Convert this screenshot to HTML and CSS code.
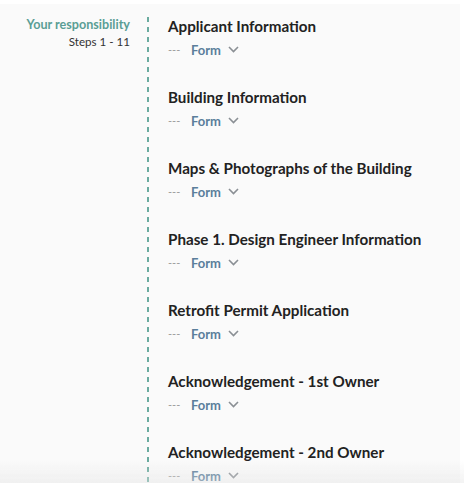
FILE: index.html
```html
<!DOCTYPE html>
<html lang="en">
<head>
    <meta charset="UTF-8">
    <meta name="viewport" content="width=device-width, initial-scale=1.0">
    <title>Steps</title>
    <link rel="stylesheet" href="styles.css">
</head>
<body>
    <div class="page">
        <div class="side">
            <p class="owner">Your responsibility</p>
            <p class="range">Steps 1 - 11</p>
        </div>
        <div class="line"></div>
        <div class="steps">
            <div class="step">
                <h3>Applicant Information</h3>
                <div class="row"><span class="dash">---</span><span class="form">Form</span><svg class="chev" width="11" height="7" viewBox="0 0 11 7"><path d="M1 1l4.5 4.5L10 1" fill="none" stroke="#8a8f94" stroke-width="1.6"/></svg></div>
            </div>
            <div class="step">
                <h3>Building Information</h3>
                <div class="row"><span class="dash">---</span><span class="form">Form</span><svg class="chev" width="11" height="7" viewBox="0 0 11 7"><path d="M1 1l4.5 4.5L10 1" fill="none" stroke="#8a8f94" stroke-width="1.6"/></svg></div>
            </div>
            <div class="step">
                <h3>Maps &amp; Photographs of the Building</h3>
                <div class="row"><span class="dash">---</span><span class="form">Form</span><svg class="chev" width="11" height="7" viewBox="0 0 11 7"><path d="M1 1l4.5 4.5L10 1" fill="none" stroke="#8a8f94" stroke-width="1.6"/></svg></div>
            </div>
            <div class="step">
                <h3>Phase 1. Design Engineer Information</h3>
                <div class="row"><span class="dash">---</span><span class="form">Form</span><svg class="chev" width="11" height="7" viewBox="0 0 11 7"><path d="M1 1l4.5 4.5L10 1" fill="none" stroke="#8a8f94" stroke-width="1.6"/></svg></div>
            </div>
            <div class="step">
                <h3>Retrofit Permit Application</h3>
                <div class="row"><span class="dash">---</span><span class="form">Form</span><svg class="chev" width="11" height="7" viewBox="0 0 11 7"><path d="M1 1l4.5 4.5L10 1" fill="none" stroke="#8a8f94" stroke-width="1.6"/></svg></div>
            </div>
            <div class="step">
                <h3>Acknowledgement - 1st Owner</h3>
                <div class="row"><span class="dash">---</span><span class="form">Form</span><svg class="chev" width="11" height="7" viewBox="0 0 11 7"><path d="M1 1l4.5 4.5L10 1" fill="none" stroke="#8a8f94" stroke-width="1.6"/></svg></div>
            </div>
            <div class="step">
                <h3>Acknowledgement - 2nd Owner</h3>
                <div class="row"><span class="dash">---</span><span class="form">Form</span><svg class="chev" width="11" height="7" viewBox="0 0 11 7"><path d="M1 1l4.5 4.5L10 1" fill="none" stroke="#8a8f94" stroke-width="1.6"/></svg></div>
            </div>
        </div>
    </div>
    <div class="fade"></div>
</body>
</html>
```

FILE: styles.css
```css
body{
    margin:0px;
    background-color:#ffffff;
    font-family:Lato, "Open Sans", sans-serif;
    overflow:hidden;
}
.page{
    margin-top:4px;
    width:460px;
    height:479px;
    background-color:#fafafa;
    display:flex;
    overflow:hidden;
}
.side{
    width:130px;
    text-align:right;
    padding-top:12px;
}
.side p{
    margin:0px;
    line-height:17px;
}
.owner{
    color:#5a9e95;
    font-weight:bold;
    font-size:12.6px;
}
.range{
    color:#333;
    font-size:11.6px;
}
.line{
    width:2px;
    margin:13px 0px 0px 17px;
    height:480px;
    background:repeating-linear-gradient(#6aab9f 0px, #6aab9f 5px, transparent 5px, transparent 10px);
}
.steps{
    padding:12px 0px 0px 19px;
}
.step{
    height:71px;
}
.step h3{
    margin:0px;
    font-size:15.2px;
    line-height:20px;
    color:#222;
    font-weight:bold;
}
.row{
    display:flex;
    align-items:center;
    margin-top:5px;
    height:17px;
}
.dash{
    color:#999;
    font-size:11px;
    width:23px;
}
.form{
    color:#5b7e9b;
    font-weight:bold;
    font-size:13px;
    margin-right:7px;
}
.fade{
    position:fixed;
    left:0px;
    right:0px;
    bottom:0px;
    height:22px;
    background:linear-gradient(rgba(230,230,230,0), rgba(228,228,228,0.45));
}
```
